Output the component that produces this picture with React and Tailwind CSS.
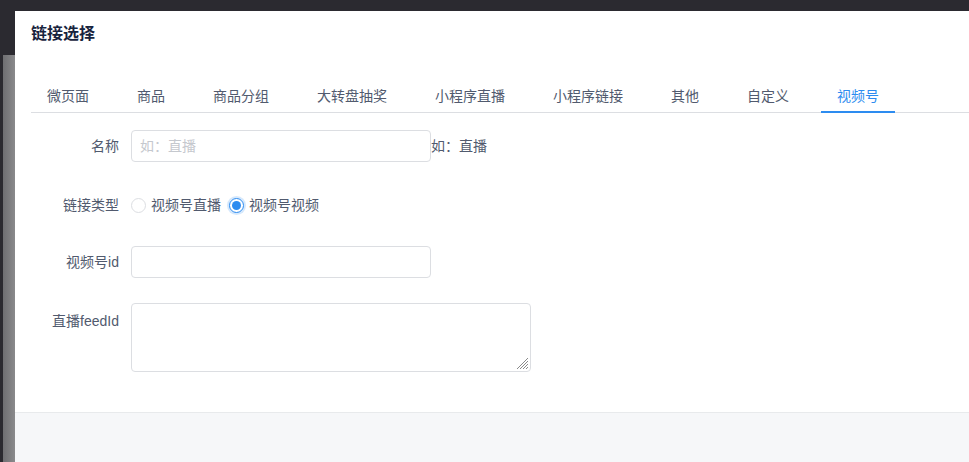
import React from 'react';

const tabs = ['微页面', '商品', '商品分组', '大转盘抽奖', '小程序直播', '小程序链接', '其他', '自定义', '视频号'];

function Radio({ checked, label }) {
  return (
    <label className="flex items-center cursor-pointer">
      {checked ? (
        <span className="w-[15px] h-[15px] rounded-full border border-[#2d8cf0] bg-white p-[2px] shadow-[0_0_0_2px_rgba(45,140,240,0.2)]">
          <span className="block w-full h-full rounded-full bg-[#2d8cf0]" />
        </span>
      ) : (
        <span className="w-[15px] h-[15px] rounded-full border border-[#dcdee2] bg-white" />
      )}
      <span className="ml-[5px] text-sm text-[#515a6e]">{label}</span>
    </label>
  );
}

export default function App() {
  const active = '视频号';

  return (
    <div
      className="h-[462px] overflow-hidden bg-[#2b2a30] flex"
      style={{ fontFamily: '"Liberation Sans", "Noto Sans CJK SC", sans-serif' }}
    >
      {/* page behind the overlay */}
      <div className="w-[15px] pt-[55px] pl-[3px]">
        <div className="h-full bg-gradient-to-r from-[#6f6f72] to-[#8a8a8c]" />
      </div>

      <div className="flex-1 pt-[11px] flex flex-col">
        <div className="flex-1 bg-white flex flex-col">
          <div className="pl-4 pt-3">
            <h1 className="text-base font-bold leading-[22px] text-[#17233d]">链接选择</h1>
          </div>

          {/* tabs */}
          <div className="ml-4 mt-[35px] flex gap-4 border-b border-[#dcdee2]">
            {tabs.map((t) => (
              <div
                key={t}
                className={
                  'relative px-4 h-8 leading-8 text-sm ' +
                  (t === active ? 'text-[#2d8cf0]' : 'text-[#515a6e]')
                }
              >
                {t}
                {t === active && (
                  <span className="absolute left-0 right-0 -bottom-px h-[2px] bg-[#2d8cf0]" />
                )}
              </div>
            ))}
          </div>

          {/* form */}
          <div className="flex-1 pt-[17px] text-sm text-[#515a6e]">
            <div className="flex items-start">
              <div className="w-[116px] pr-3 text-right leading-8">名称</div>
              <input
                className="w-[300px] h-8 border border-[#dcdee2] rounded px-2 text-sm outline-none placeholder:text-[#c5c8ce]"
                placeholder="如：直播"
              />
              <div className="leading-8">如：直播</div>
            </div>

            <div className="flex items-center mt-[27px] h-8">
              <div className="w-[116px] pr-3 text-right">链接类型</div>
              <div className="flex items-center gap-2">
                <Radio label="视频号直播" />
                <Radio checked label="视频号视频" />
              </div>
            </div>

            <div className="flex items-start mt-[25px]">
              <div className="w-[116px] pr-3 text-right leading-8">视频号id</div>
              <input className="w-[300px] h-8 border border-[#dcdee2] rounded px-2 text-sm outline-none" />
            </div>

            <div className="flex items-start mt-[25px]">
              <div className="w-[116px] pr-3 text-right pt-[7px] leading-[22px]">直播feedId</div>
              <div className="relative">
                <textarea className="block w-[400px] h-[69px] border border-[#dcdee2] rounded px-2 py-1 text-sm outline-none resize-none" />
                {/* resize grip */}
                <svg
                  className="absolute right-[2px] bottom-[2px]"
                  width="14"
                  height="14"
                  viewBox="0 0 14 14"
                  stroke="#8a8a8a"
                  strokeWidth="1"
                >
                  <line x1="2" y1="13" x2="13" y2="2" />
                  <line x1="5" y1="13" x2="13" y2="5" />
                  <line x1="8" y1="13" x2="13" y2="8" />
                  <line x1="11" y1="13" x2="13" y2="11" />
                </svg>
              </div>
            </div>
          </div>

          {/* footer */}
          <div className="h-[50px] border-t border-[#e8eaec] bg-[#f6f7f9]" />
        </div>
      </div>
    </div>
  );
}
